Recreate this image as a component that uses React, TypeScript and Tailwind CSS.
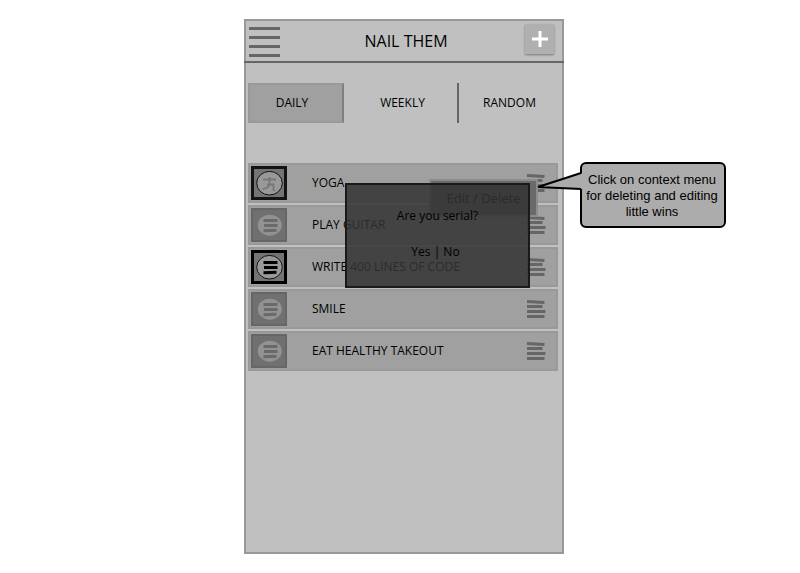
import React from "react";

type Icon = "run" | "list";
type Win = { name: string; icon: Icon; done: boolean };

const wins: Win[] = [
  { name: "YOGA", icon: "run", done: true },
  { name: "PLAY GUITAR", icon: "list", done: false },
  { name: "WRITE 400 LINES OF CODE", icon: "list", done: true },
  { name: "SMILE", icon: "list", done: false },
  { name: "EAT HEALTHY TAKEOUT", icon: "list", done: false },
];

function Badge({ icon, done }: { icon: Icon; done: boolean }) {
  const edge = !done ? "#666666" : icon === "run" ? "#141414" : "#000000";
  const bars = done ? "#000000" : "#6a6a6a";
  return (
    <svg width="36" height="34" viewBox="0 0 36 34" aria-hidden="true">
      <rect width="36" height="34" fill={edge} />
      {done ? (
        <rect x="3" y="3" width="30" height="28" fill="#747474" />
      ) : (
        <rect x="2" y="2" width="32" height="30" fill="#707070" />
      )}
      {done ? (
        <ellipse cx="18.5" cy="17.2" rx="12.8" ry="11.8" fill="#999999" stroke="#111111" strokeWidth="1" />
      ) : (
        <ellipse cx="18.8" cy="17.2" rx="12" ry="10.5" fill="#929292" />
      )}
      {icon === "run" ? (
        <path
          d="M12 13.5h13M18.5 11v8M16 18.500h6.500v5.500l1 1M18.500 18.500c-1 3-3 4-7 4.500"
          fill="none"
          stroke="#777777"
          strokeWidth="1.800"
        />
      ) : (
        <path d="M12.500 12.500h14M13 17.500h13.500M12.500 22.700l13-.4" fill="none" stroke={bars} strokeWidth="3" />
      )}
    </svg>
  );
}

function RowMenuIcon() {
  return (
    <svg width="20" height="20" viewBox="0 0 20 20" aria-hidden="true">
      <path d="M1 2.500l17.500 1M1 7.500h15.500M1 12.500h18.500M1 17.500h17.500" fill="none" stroke="#666666" strokeWidth="3" />
    </svg>
  );
}

export default function App() {
  return (
    <main className="flex min-h-screen justify-center bg-white py-[19px] pl-2 font-['Open_Sans',sans-serif] text-xs text-black">
      <div className="relative w-80 border-2 border-[#999] bg-[#c0c0c0]">
        <header className="-mx-0.5 flex h-[42px] items-center border-b-2 border-[#666] pr-2.5 pl-[5px]">
          <button aria-label="Menu" className="flex w-[38px] flex-col gap-1.5 pt-0.5">
            <span className="h-[3px] w-[31px] bg-[#666]" />
            <span className="h-[3px] w-[31px] bg-[#666]" />
            <span className="h-[3px] w-[31px] bg-[#666]" />
            <span className="h-[3px] w-[31px] bg-[#666]" />
          </button>
          <h1 className="flex-1 text-center text-base">NAIL THEM</h1>
          <button
            aria-label="Add little win"
            className="mb-1 flex h-[30px] w-[29px] items-center justify-center bg-[#b0b0b0] shadow-[0_1px_2px_#777]"
          >
            <svg width="16" height="16" viewBox="0 0 16 16" aria-hidden="true">
              <path d="M0 8h16M8 0v16" stroke="#fff" strokeWidth="3" />
            </svg>
          </button>
        </header>

        <nav className="mt-5 flex h-10 pr-1 pl-0.5">
          <button className="w-24 border-2 border-[#999] border-r-[#808080] bg-[#a0a0a0] pr-2">DAILY</button>
          <button className="w-[115px] border-r-2 border-[#666] pl-1">WEEKLY</button>
          <button className="flex-1 pl-0.5">RANDOM</button>
        </nav>

        <ul className="mt-10 flex flex-col gap-0.5 pr-1 pl-0.5">
          {wins.map((win) => (
            <li key={win.name} className="flex h-10 items-center border-2 border-[#999] bg-[#a0a0a0] pr-2.5 pl-px">
              <Badge icon={win.icon} done={win.done} />
              <span className="flex-1 pl-[25px]">{win.name}</span>
              <button aria-label={`Options for ${win.name}`}>
                <RowMenuIcon />
              </button>
            </li>
          ))}
        </ul>

        <button className="absolute top-[158px] left-[183px] h-[38px] w-[109px] border-2 border-[#8c8c8c] bg-[#6a6a6a] pt-0.5 text-[13px] text-black">
          Edit / Delete
        </button>

        <div
          role="dialog"
          aria-label="Confirm"
          className="absolute top-[162px] left-[99px] flex h-[105px] w-[185px] flex-col items-center gap-4 border-2 border-[#1a1a1a] bg-[#333]/85 pt-[21px]"
        >
          <p className="text-xs leading-5">Are you serial?</p>
          <p className="pr-1 text-xs leading-5">
            <button>Yes</button> | <button>No</button>
          </p>
        </div>

        <aside className="absolute top-[141px] left-[334px] w-[146px] rounded-md border-2 border-black bg-[#acacac] pt-2 pr-1 pb-1.5 pl-0.5 text-center font-['Liberation_Sans',sans-serif] text-[13px] leading-4">
          <svg className="absolute top-2 -left-[46px]" width="47" height="20" viewBox="0 0 47 20" aria-hidden="true">
            <path d="M47 1L2 15l45 2z" fill="#acacac" />
            <path d="M45 1L2 15l43 2" fill="none" stroke="#000" strokeWidth="2" />
          </svg>
          Click on context menu for deleting and editing little wins
        </aside>
      </div>
    </main>
  );
}
